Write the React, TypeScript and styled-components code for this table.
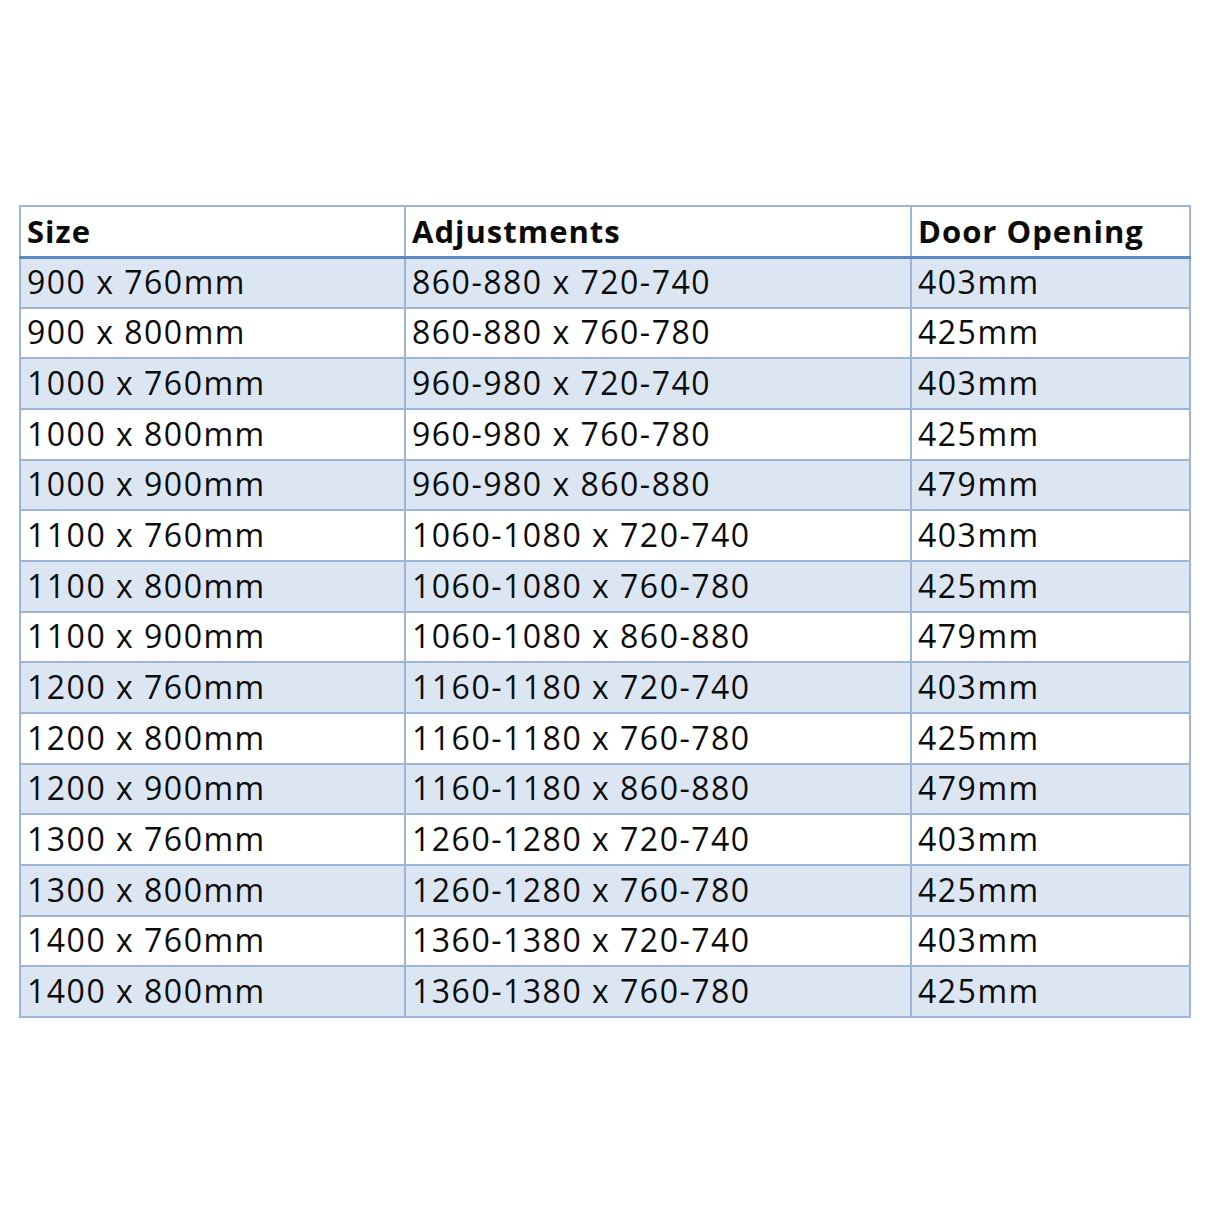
import React from 'react';
import styled, { createGlobalStyle } from 'styled-components';

const GlobalStyle = createGlobalStyle`
  html, body {
    margin: 0;
    padding: 0;
    background: #ffffff;
  }
`;

const Page = styled.div`
  width: 1214px;
  height: 1214px;
  padding: 205px 0 0 19px;
  box-sizing: border-box;
  background: #ffffff;
`;

const Table = styled.table`
  border-collapse: collapse;
  table-layout: fixed;
  width: 1170px;
  font-family: 'Open Sans', 'Liberation Sans', sans-serif;
  color: #0c0c0c;
  border: 2px solid #9cb6d8;
`;

const Col = styled.col<{ $w: number }>`
  width: ${(p) => p.$w}px;
`;

const HeadRow = styled.tr`
  height: 51px;
  background: #ffffff;
`;

const HeadCell = styled.th`
  box-sizing: border-box;
  padding: 0 0 1px 6px;
  text-align: left;
  font-size: 31px;
  font-weight: 700;
  letter-spacing: 1px;
  border-left: 2px solid #9cb6d8;
  border-bottom: 3px solid #5a8ac6;
  vertical-align: middle;
`;

const Row = styled.tr<{ $shaded: boolean }>`
  height: 50.67px;
  background: ${(p) => (p.$shaded ? '#dce6f2' : '#ffffff')};
`;

const Cell = styled.td`
  box-sizing: border-box;
  padding: 0 0 2px 6px;
  font-size: 32px;
  font-weight: 400;
  letter-spacing: 1.5px;
  white-space: nowrap;
  border-left: 2px solid #9cb6d8;
  border-top: 2px solid #9cb6d8;
  vertical-align: middle;
`;

const rows: [string, string, string][] = [
  ['900 x 760mm', '860-880 x 720-740', '403mm'],
  ['900 x 800mm', '860-880 x 760-780', '425mm'],
  ['1000 x 760mm', '960-980 x 720-740', '403mm'],
  ['1000 x 800mm', '960-980 x 760-780', '425mm'],
  ['1000 x 900mm', '960-980 x 860-880', '479mm'],
  ['1100 x 760mm', '1060-1080 x 720-740', '403mm'],
  ['1100 x 800mm', '1060-1080 x 760-780', '425mm'],
  ['1100 x 900mm', '1060-1080 x 860-880', '479mm'],
  ['1200 x 760mm', '1160-1180 x 720-740', '403mm'],
  ['1200 x 800mm', '1160-1180 x 760-780', '425mm'],
  ['1200 x 900mm', '1160-1180 x 860-880', '479mm'],
  ['1300 x 760mm', '1260-1280 x 720-740', '403mm'],
  ['1300 x 800mm', '1260-1280 x 760-780', '425mm'],
  ['1400 x 760mm', '1360-1380 x 720-740', '403mm'],
  ['1400 x 800mm', '1360-1380 x 760-780', '425mm'],
];

const App = () => (
  <Page>
    <GlobalStyle />
    <Table>
      <colgroup>
        <Col $w={385} />
        <Col $w={506} />
        <Col $w={279} />
      </colgroup>
      <thead>
        <HeadRow>
          <HeadCell>Size</HeadCell>
          <HeadCell>Adjustments</HeadCell>
          <HeadCell>Door Opening</HeadCell>
        </HeadRow>
      </thead>
      <tbody>
        {rows.map((r, i) => (
          <Row key={r[0]} $shaded={i % 2 === 0}>
            <Cell>{r[0]}</Cell>
            <Cell>{r[1]}</Cell>
            <Cell>{r[2]}</Cell>
          </Row>
        ))}
      </tbody>
    </Table>
  </Page>
);

export default App;
